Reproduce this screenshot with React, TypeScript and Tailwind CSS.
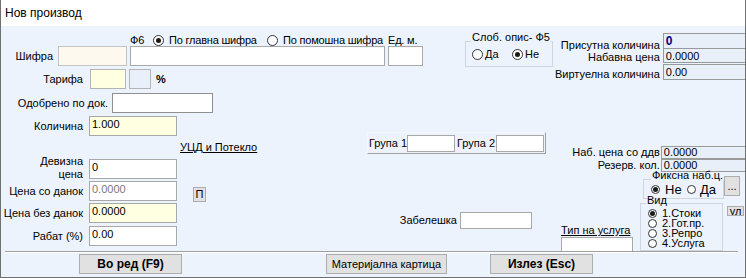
import { FC, ReactNode } from "react";

const LINE = "bg-[#cdd5de]";

interface RadioProps {
  checked?: boolean;
  label?: string;
  circle: string;
  dot: string;
  gap: string;
  className?: string;
}

const Radio: FC<RadioProps> = ({ checked, label, circle, dot, gap, className = "" }) => (
  <span className={`flex items-center shrink-0 ${className}`}>
    <span className={`${circle} rounded-full border border-[#333] bg-white flex items-center justify-center shrink-0`}>
      {checked && <span className={`${dot} rounded-full bg-[#1a1a1a]`} />}
    </span>
    {label && <span className={`${gap} whitespace-nowrap`}>{label}</span>}
  </span>
);

interface GroupProps {
  title: string;
  left: string;
  titleClass: string;
  className: string;
  bodyClass: string;
  children?: ReactNode;
}

// рамка со наслов, како WinForms GroupBox
const GroupBox: FC<GroupProps> = ({ title, left, titleClass, className, bodyClass, children }) => (
  <div className={`flex flex-col shrink-0 ${className}`}>
    <div className="flex items-end h-[11px]">
      <div className={`${left} h-px ${LINE} shrink-0`} />
      <div className={`px-[1px] whitespace-nowrap ${titleClass}`}>{title}</div>
      <div className={`flex-1 h-px ${LINE}`} />
    </div>
    <div className={`border-x border-b border-[#cdd5de] ${bodyClass}`}>{children}</div>
  </div>
);

const Field: FC<{ className: string; children?: ReactNode }> = ({ className, children }) => (
  <div className={`border border-[#8f8f8f] px-[2px] leading-[15px] whitespace-nowrap overflow-hidden shrink-0 ${className}`}>
    {children}
  </div>
);

const Label: FC<{ className: string; children: ReactNode }> = ({ className, children }) => (
  <div className={`flex justify-end whitespace-nowrap shrink-0 leading-[13px] ${className}`}>{children}</div>
);

const Btn: FC<{ className: string; children: ReactNode }> = ({ className, children }) => (
  <div className={`bg-[#e1e1e1] border border-[#adadad] flex items-center justify-center whitespace-nowrap shrink-0 ${className}`}>
    {children}
  </div>
);

const InfoRow: FC<{ label: string; value: ReactNode; labelTop: string; boxClass: string }> = ({ label, value, labelTop, boxClass }) => (
  <div className="flex h-[16px] items-start">
    <Label className={`flex-1 pr-[3px] ${labelTop}`}>{label}</Label>
    <div className={`w-[85px] border border-[#9a9a9a] bg-[#e9eff9] px-[2px] leading-[14px] ${boxClass}`}>{value}</div>
  </div>
);

export default function App() {
  return (
    <div className="w-[746px] h-[278px] border-x border-b border-[#707070] bg-white text-[11px] text-black font-['Liberation_Sans',Arial,sans-serif] flex flex-col overflow-hidden">
      <div className="h-[26px] flex items-center pl-[4px] text-[12px] shrink-0">Нов производ</div>

      <div className="flex-1 bg-[#edf3fd] flex flex-col">
        <div className="flex h-[225px]">
          {/* лева страна */}
          <div className="w-[554px] flex flex-col shrink-0">
            <div className="flex mt-[5px]">
              <div className="w-[430px] mt-[4px] flex flex-col shrink-0">
                <div className="h-[11px] flex items-center pl-[129px] leading-[13px] tracking-[-0.2px]">
                  <span className="w-[23px] shrink-0">Ф6</span>
                  <Radio checked label="По главна шифра" circle="w-[11px] h-[11px]" dot="w-[5px] h-[5px]" gap="ml-[5px]" className="w-[114px]" />
                  <Radio label="По помошна шифра" circle="w-[11px] h-[11px]" dot="w-[5px] h-[5px]" gap="ml-[5px]" className="w-[121px]" />
                  <span className="whitespace-nowrap">Ед. м.</span>
                </div>
                <div className="h-[20px] flex items-center">
                  <Label className="w-[52px]">Шифра</Label>
                  <Field className="ml-[5px] w-[69px] h-[20px] bg-[#fdf9ef] border-[#c4c4c4]" />
                  <Field className="ml-[3px] w-[255px] h-[20px] bg-white border-[#a8a8a8]" />
                  <Field className="ml-[3px] w-[35px] h-[20px] bg-white border-[#a8a8a8]" />
                </div>
                <div className="h-[20px] mt-[3px] flex items-center">
                  <Label className="w-[82px]">Тарифа</Label>
                  <Field className="ml-[7px] w-[36px] h-[20px] bg-[#ffffe1] border-[#b4b4b4]" />
                  <Field className="ml-[3px] w-[22px] h-[20px] bg-[#e9f0fa] border-[#b4b4b4]" />
                  <span className="ml-[5px] font-bold">%</span>
                </div>
              </div>
              <GroupBox title="Слоб. опис- Ф5" left="w-[6px]" titleClass="leading-[11px] -mb-[1px]" className="ml-[34px] w-[88px]" bodyClass="h-[25px] pt-[7px] pl-[6px] flex items-start">
                <Radio label="Да" circle="w-[11px] h-[11px]" dot="w-[5px] h-[5px]" gap="ml-[2px]" className="w-[40px] leading-[11px]" />
                <Radio checked label="Не" circle="w-[11px] h-[11px]" dot="w-[5px] h-[5px]" gap="ml-[2px]" className="leading-[11px]" />
              </GroupBox>
            </div>

            <div className="h-[20px] mt-[4px] flex items-center">
              <Label className="w-[107px]">Одобрено по док.</Label>
              <Field className="ml-[4px] w-[101px] h-[20px] bg-white border-[#7d7d7d]" />
            </div>

            <div className="flex mt-[3px]">
              <div className="w-[366px] flex flex-col shrink-0">
                <div className="h-[20px] flex items-center">
                  <Label className="w-[82px]">Количина</Label>
                  <Field className="ml-[6px] w-[88px] h-[20px] bg-[#ffffe1] border-[#a8a8a8]">1.000</Field>
                </div>
                <div className="mt-[5px] ml-[179px] leading-[13px] underline whitespace-nowrap">УЦД и Потекло</div>
              </div>
              <div className="mt-[16px] w-[179px] h-[22px] border border-t-[#f4f7fc] border-l-[#f4f7fc] border-b-[#a0a0a0] border-r-[#a0a0a0] flex items-center pl-[1px] shrink-0">
                <span className="w-[38px] whitespace-nowrap shrink-0">Група 1</span>
                <Field className="w-[48px] h-[17px] bg-white border-[#a8a8a8]" />
                <span className="ml-[2px] w-[39px] whitespace-nowrap shrink-0">Група 2</span>
                <Field className="w-[48px] h-[17px] bg-white border-[#a8a8a8]" />
              </div>
            </div>

            <div className="mt-[1px] h-[26px] flex items-start">
              <Label className="w-[82px] text-right">
                <span>
                  Девизна
                  <br />
                  цена
                </span>
              </Label>
              <Field className="ml-[6px] mt-[4px] w-[88px] h-[20px] bg-white border-[#a8a8a8]">0</Field>
            </div>

            <div className="h-[20px] flex items-center">
              <Label className="w-[82px]">Цена со данок</Label>
              <Field className="ml-[6px] w-[88px] h-[20px] bg-white border-[#a8a8a8] text-[#7a7a7a]">0.0000</Field>
              <Btn className="self-start mt-[6px] ml-[16px] w-[13px] h-[15px] leading-[13px]">П</Btn>
            </div>

            <div className="flex mt-[2px]">
              <div className="w-[390px] flex flex-col shrink-0">
                <div className="h-[20px] flex items-center">
                  <Label className="w-[82px]">Цена без данок</Label>
                  <Field className="ml-[6px] w-[88px] h-[20px] bg-[#ffffe1] border-[#a8a8a8]">0.0000</Field>
                </div>
                <div className="h-[20px] mt-[3px] flex items-center">
                  <Label className="w-[82px]">Рабат (%)</Label>
                  <Field className="ml-[6px] w-[88px] h-[20px] bg-white border-[#a8a8a8]">0.00</Field>
                </div>
              </div>
              <div className="mt-[9px] w-[141px] h-[17px] flex items-center justify-end shrink-0">
                <span className="whitespace-nowrap">Забелешка</span>
                <Field className="ml-[3px] w-[72px] h-[17px] bg-white border-[#a8a8a8]" />
              </div>
            </div>
          </div>

          {/* десна страна */}
          <div className="flex-1 flex flex-col">
            <div className="mt-[7px] flex flex-col">
              <InfoRow label="Присутна количина" labelTop="mt-[6px]" boxClass="h-[16px] font-bold text-[#000080] text-[12px]" value="0" />
              <InfoRow label="Набавна цена" labelTop="mt-[2px]" boxClass="h-[15px] -mt-px" value="0.0000" />
              <InfoRow label="Виртуелна количина" labelTop="mt-[3px]" boxClass="h-[16px] -mt-px" value="0.00" />
            </div>

            <div className="mt-[65px] flex flex-col pr-[2px]">
              <div className="h-[13px] flex items-center">
                <Label className="flex-1 pr-[1px]">Наб. цена со ддв</Label>
                <div className="w-[85px] h-[13px] border border-[#9a9a9a] bg-[#e9eff9] px-[2px] leading-[11px]">0.0000</div>
              </div>
              <div className="h-[13px] flex items-center">
                <Label className="flex-1 pr-[1px]">Резерв. кол.</Label>
                <div className="w-[85px] h-[13px] border border-[#9a9a9a] bg-[#e9eff9] px-[2px] leading-[11px]">0.0000</div>
              </div>
            </div>

            <div className="-mt-[3px] flex items-start">
              <GroupBox title="Фиксна наб.ц." left="w-[8px]" titleClass="leading-[11px] -mb-[1px]" className="ml-[88px] w-[81px]" bodyClass="h-[19px] pt-[3px] pl-[7px] flex items-start text-[13px] leading-[13px]">
                <Radio checked label="Не" circle="w-[9px] h-[9px]" dot="w-[5px] h-[5px]" gap="ml-[5px]" className="w-[36px] h-[13px]" />
                <Radio label="Да" circle="w-[9px] h-[9px]" dot="w-[5px] h-[5px]" gap="ml-[4px]" className="h-[13px]" />
              </GroupBox>
              <Btn className="mt-[7px] w-[16px] h-[20px] leading-[13px]">...</Btn>
            </div>

            <div className="-mt-[6px] flex items-start">
              <div className="ml-[6px] mt-[31px] w-[72px] flex flex-col shrink-0">
                <div className="leading-[13px] underline whitespace-nowrap">Тип на услуга</div>
                <Field className="w-[72px] h-[15px] bg-white border-[#a8a8a8]" />
              </div>
              <GroupBox title="Вид" left="w-[6px]" titleClass="leading-[11px] -mb-[2px]" className="ml-[7px] w-[83px]" bodyClass="h-[47px] pt-[4px] pl-[7px] flex flex-col leading-[10px]">
                <Radio checked label="1.Стоки" circle="w-[9px] h-[9px]" dot="w-[5px] h-[5px]" gap="ml-[5px]" className="h-[10px]" />
                <Radio label="2.Гот.пр." circle="w-[9px] h-[9px]" dot="w-[5px] h-[5px]" gap="ml-[5px]" className="h-[10px]" />
                <Radio label="3.Репро" circle="w-[9px] h-[9px]" dot="w-[5px] h-[5px]" gap="ml-[5px]" className="h-[10px]" />
                <Radio label="4.Услуга" circle="w-[9px] h-[9px]" dot="w-[5px] h-[5px]" gap="ml-[5px]" className="h-[10px]" />
              </GroupBox>
              <Btn className="ml-[4px] mt-[13px] w-[17px] h-[10px] leading-[8px] overflow-hidden">ул</Btn>
            </div>
          </div>
        </div>

        <div className="ml-[4px] w-[733px] h-[2px] border-t border-b border-t-[#a0a0a0] border-b-white shrink-0" />

        <div className="mt-[1px] flex">
          <Btn className="ml-[78px] w-[103px] h-[20px] font-bold text-[12px]">Во ред (F9)</Btn>
          <Btn className="ml-[144px] w-[121px] h-[20px]">Материјална картица</Btn>
          <Btn className="ml-[43px] w-[103px] h-[20px] font-bold text-[12px]">Излез (Esc)</Btn>
        </div>
      </div>
    </div>
  );
}
